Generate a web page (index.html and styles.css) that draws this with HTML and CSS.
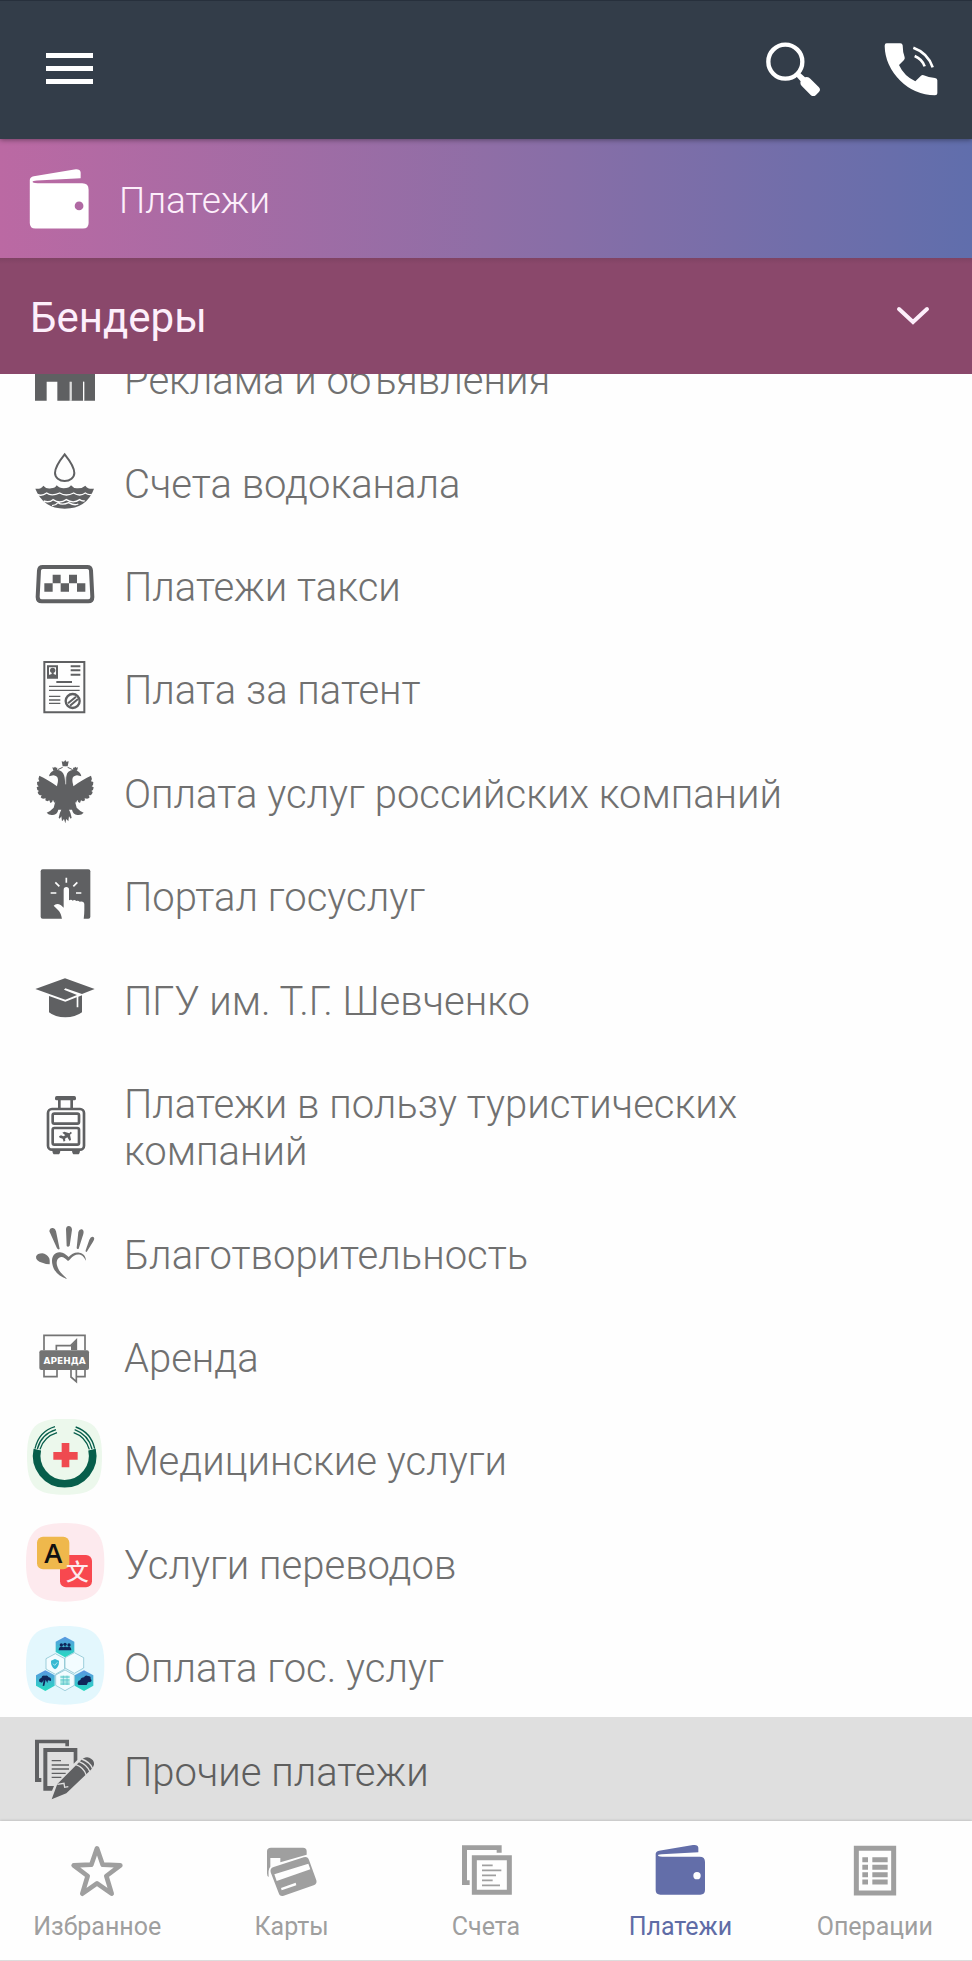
FILE: index.html
```html
<!DOCTYPE html>
<html lang="ru">
<head>
    <meta charset="UTF-8">
    <meta name="viewport" content="width=device-width, initial-scale=1.0">
    <title>Платежи</title>
    <link rel="stylesheet" href="styles.css">
</head>
<body>
    <header class="topbar">
        <button type="button" class="icon-btn" aria-label="Меню">
            <svg class="icon-menu" viewBox="0 0 47 32"><path d="M0 0h47v5H0zM0 13h47v5H0zM0 26h47v5H0z"/></svg>
        </button>
        <div class="topbar-actions">
            <button type="button" class="icon-btn" aria-label="Поиск">
                <svg class="icon-top" viewBox="843 128 162 162">
                    <circle cx="901" cy="187" r="51" fill="none" stroke="#fff" stroke-width="13"/>
                    <path d="M932 229l11-10 17 15q10-3 16 4l25 25q8 8 0 16l-8 8q-8 8-16 0l-26-26q-7-7-4-15z"/>
                </svg>
            </button>
            <button type="button" class="icon-btn" aria-label="Позвонить">
                <svg class="icon-top" viewBox="1196 128 162 162">
                    <path d="M1204 132h41q6 0 7 6 0 20 6 36 1 5-2 8l-15 15q15 33 49 49l17-17q4-3 8-1 14 6 34 8 7 1 7 7v39q0 6-7 6-62-2-104-44-46-46-47-105 0-7 6-7z"/>
                    <path d="M1284 145q44 16 58 59M1288 170q22 9 30 31" fill="none" stroke="#fff" stroke-width="8"/>
                </svg>
            </button>
        </div>
    </header>

    <div class="section-title">
        <svg class="icon-wallet" viewBox="508 434 151 151"><path d="M510 462q0-8 10-10l102-17q15-2 16 8v14l-110 6q-14 1-10 5 4 2 12 2h112q16 0 16 16v84q0 14-14 14H524q-14 0-14-14z"/><circle class="wallet-dot" cx="634" cy="527" r="11"/></svg>
        <h1>Платежи</h1>
    </div>

    <div class="city">
        <select id="city" name="city" aria-label="Город">
            <option>Бендеры</option>
            <option>Тирасполь</option>
            <option>Рыбница</option>
        </select>
        <svg class="icon-chevron" viewBox="0 0 34 20"><path d="M3 3l14 13L31 3" fill="none" stroke="#fdeffb" stroke-width="4" stroke-linecap="round"/></svg>
    </div>

    <main class="list">
        <a class="row" href="#">
            <svg class="row-icon" viewBox="75 1014 240 240"><path d="M105 1080h180v122h-33v-57h-2v57h-39v-57h-2v57h-37v-57h-32v57h-35z"/><path d="M211 1145h4v57h-4zM249 1145h4v57h-4z" fill="#fefefe"/></svg>
            <span>Реклама и объявления</span>
        </a>
        <a class="row" href="#">
            <svg class="row-icon" viewBox="75 64 240 240">
                <path d="M194 101q-29 36-29 56a29 24 0 0 0 58 0q0-20-29-56z" fill="none" stroke="#5f6062" stroke-width="6"/>
                <path d="M106 204q15 3 24-9 9 11 23 8 13 0 17-9 8 9 21 9 17 0 22-9 7 9 18 9 15 1 25-8 9 12 26 9-21 59-88 60-65-1-88-60z"/>
                <path d="M112 221q13 7 28-4 14 11 39 0 19 12 42 0 18 12 35 0 10 7 19 4M131 241q17 6 28-4 20 14 40 0 21 13 40 0 9 6 15 3M156 255q12-1 18-9 12 9 32 0 18 10 29 4" fill="none" stroke="#fefefe" stroke-width="4"/>
            </svg>
            <span>Счета водоканала</span>
        </a>
        <a class="row" href="#">
            <svg class="row-icon" viewBox="75 374 240 240">
                <path d="M128 440h134q10 0 11 10l4 80q0 13-12 13H125q-12 0-12-13l4-80q1-10 11-10z" fill="none" stroke="#5f6062" stroke-width="12"/>
                <path d="M158 463h24v26h-24zM207 463h24v26h-24zM133 489h25v25h-25zM182 489h25v25h-25zM231 489h25v25h-25z"/>
            </svg>
            <span>Платежи такси</span>
        </a>
        <a class="row" href="#">
            <svg class="row-icon" viewBox="75 685 240 240">
                <path d="M133 727h120v151H133zM144 740h27v34h-27z" fill="none" stroke="#5f6062" stroke-width="6"/>
                <circle cx="158" cy="752" r="8"/><path d="M155 758h6v5l10 4v8h-27v-8l11-4z"/>
                <path d="M212 740h29M212 752h29M212 765h29M169 787h47" stroke="#5f6062" stroke-width="6"/>
                <path d="M147 800h92M147 812h92M147 830h34M147 841h34M147 851h34" stroke="#5f6062" stroke-width="4"/>
                <circle cx="218" cy="844" r="21" fill="none" stroke="#5f6062" stroke-width="7"/>
                <path d="M204 851l24-20M210 858l24-20" stroke="#5f6062" stroke-width="6"/>
            </svg>
            <span>Плата за патент</span>
        </a>
        <a class="row" href="#">
            <svg class="row-icon" viewBox="75 65 240 240">
                <defs>
                    <g id="eagle-half">
                        <path d="M196 89L192 94L185 93L188 108H196z"/>
                        <path d="M188 111L173 118" fill="none" stroke="#5f6062" stroke-width="3"/>
                        <path d="M157 111L162 112L165 109L168 112L172 112L171 122L160 121z"/>
                        <path d="M196 162C194 146 197 122 171 118L160 121Q149 126 147 138L160 135C168 136 174 140 174 148C174 158 171 162 171 168C152 153 134 144 118 136Q113 145 118 153L111 155Q110 164 116 168L110 171Q110 180 117 182L113 185Q115 196 125 195L122 201Q126 208 137 204L136 210Q142 215 148 210L151 218Q158 216 159 208L163 218Q167 214 167 210L161 232Q152 242 140 247Q147 256 159 254Q172 252 175 238L184 238Q178 248 176 262L179 265L184 258L186 273L192 266L196 279z"/>
                    </g>
                </defs>
                <use href="#eagle-half"/>
                <use href="#eagle-half" transform="translate(391 0) scale(-1 1)"/>
                <path d="M200 128q-4 12-3 34" fill="none" stroke="#fefefe" stroke-width="2"/>
            </svg>
            <span>Оплата услуг российских компаний</span>
        </a>
        <a class="row" href="#">
            <svg class="row-icon" viewBox="75 376 240 240">
                <rect x="122" y="419" width="149" height="148" rx="6"/>
                <path d="M186 569q-2-18-12-28l-13-13q9-10 22-1l8 7v-54q0-8 8-8t8 8v32q7-4 11 1 5-4 11 1 5-3 10 2 13-3 14 8v17q0 12-2 28z" fill="#fefefe"/>
                <path d="M199 444v15M166 458l12 12M232 458l-12 12M152 490h17M228 490h16" stroke="#fefefe" stroke-width="5"/>
            </svg>
            <span>Портал госуслуг</span>
        </a>
        <a class="row" href="#">
            <svg class="row-icon" viewBox="75 686 240 240">
                <path d="M195 744l89 32-38 15-50-17-4 4 39 16-35 14-90-32z"/>
                <path d="M147 797l49 17 34-13v30h5v-32l11-4v51q-20 15-50 15-31 0-49-15z"/>
            </svg>
            <span>ПГУ им. Т.Г. Шевченко</span>
        </a>
        <a class="row" href="#">
            <svg class="row-icon" viewBox="75 46 240 240">
                <rect x="165" y="76" width="63" height="13" rx="5"/>
                <path d="M178 88v26M215 88v26" stroke="#5f6062" stroke-width="8"/>
                <g fill="none" stroke="#5f6062">
                    <rect x="144" y="115" width="108" height="122" rx="12" stroke-width="8"/>
                    <rect x="158" y="129" width="79" height="30" rx="5" stroke-width="8"/>
                    <rect x="158" y="172" width="79" height="50" rx="5" stroke-width="8"/>
                </g>
                <path d="M157 237h24q0 14-7 14h-10q-7 0-7-14zM216 237h24q0 14-7 14h-10q-7 0-7-14z"/>
                <path d="M177 197l6-3 7 3 6-3-9-8 6-3 15 5 4-5 4 4-6 5 3 15-4 4-7-11-7 4 1 6-5 3-3-9-9-3z"/>
            </svg>
            <span>Платежи в пользу туристических компаний</span>
        </a>
        <a class="row" href="#">
            <svg class="row-icon row-icon-soft" viewBox="75 427 240 240">
                <path d="M148 482q1-11 11-10 7 1 9 10l11 53q-5 3-8-2zM198 475q1-9 8-9 9 0 10 11l-7 48q-5 6-9 1zM235 484q3-10 11-8 7 3 4 14l-14 44q-5 3-6-2zM268 507q5-11 12-8 6 4-1 14l-19 31q-5 0-3-5zM108 558q4-10 19-10 13 2 20 13 3 5 2 20-11 0-22-5-20-6-19-18z"/>
                <path d="M157 580C153 560 162 546 178 545C190 544 197 552 206 559C214 550 225 544 238 546C250 548 259 558 257 570C249 550 234 549 222 555C214 559 210 567 204 571C197 564 190 558 183 559C172 561 168 572 171 584C175 600 185 610 202 625C177 618 160 600 157 580z"/>
            </svg>
            <span>Благотворительность</span>
        </a>
        <a class="row" href="#">
            <svg class="row-icon row-icon-soft" viewBox="75 737 240 240">
                <path d="M132 840v-45h123v45M169 840v-14h43l17-17v30M132 899v20h39v-20M255 899v20h-26M213 899v21l16 14v-35" fill="none" stroke="#747474" stroke-width="5"/>
                <path d="M213 826l16-15v28h-16z"/>
                <rect x="118" y="840" width="149" height="59" rx="6"/>
                <text class="rent-text" x="194" y="880" text-anchor="middle">АРЕНДА</text>
            </svg>
            <span>Аренда</span>
        </a>
        <a class="row" href="#">
            <svg class="row-icon" viewBox="75 58 240 240">
                <path d="M81 171C81 82 106 57 194 57S306 82 306 171S282 285 194 285S81 260 81 171z" fill="#ecf8ec"/>
                <g fill="none" stroke="#075e4b">
                    <path d="M112 150a84 84 0 1 0 164 0" stroke-width="23"/>
                    <path d="M105 147Q117 95 165 81M112 148Q124 103 168 90M120 149Q132 111 171 99M284 147Q273 98 227 82M276 148Q265 105 224 90M268 149Q256 111 221 99" stroke-width="4"/>
                </g>
                <path d="M185 130h23v27h25v23h-25v23h-23v-23h-25v-23h25z" fill="#ef4a50"/>
            </svg>
            <span>Медицинские услуги</span>
        </a>
        <a class="row" href="#">
            <svg class="row-icon" viewBox="75 368 240 240">
                <path d="M78 486C78 396 106 368 195 368S313 396 313 486S285 604 195 604S78 576 78 486z" fill="#fdeaee"/>
                <rect x="180" y="464" width="96" height="97" rx="18" fill="#f8484f"/>
                <rect x="111" y="409" width="97" height="98" rx="18" fill="#efb84c"/>
                <text class="glyph-a" x="160" y="489" text-anchor="middle">A</text>
                <text class="glyph-wen" x="232" y="538" text-anchor="middle">文</text>
            </svg>
            <span>Услуги переводов</span>
        </a>
        <a class="row" href="#">
            <svg class="row-icon" viewBox="75 679 240 240">
                <defs>
                    <linearGradient id="hexFill" x1="0" y1="0" x2="0" y2="1">
                        <stop offset="0" stop-color="#5b94e2"/>
                        <stop offset="1" stop-color="#24dcc0"/>
                    </linearGradient>
                    <path id="hex" d="M0-31l28 15v31L0 31l-28-16v-31z"/>
                </defs>
                <path d="M78 797C78 707 106 679 195 679S313 707 313 797S285 915 195 915S78 887 78 797z" fill="#e3f7fd"/>
                <g fill="url(#hexFill)">
                    <use href="#hex" x="195" y="742"/>
                    <use href="#hex" x="136" y="843"/>
                    <use href="#hex" x="252" y="843"/>
                </g>
                <g fill="#f3fcff" stroke="#77b9c8" stroke-width="2">
                    <use href="#hex" x="166" y="793"/>
                    <use href="#hex" x="223" y="790"/>
                    <use href="#hex" x="195" y="842"/>
                </g>
                <g fill="#10265a">
                    <circle cx="184" cy="736" r="5"/><circle cx="195" cy="734" r="5"/><circle cx="207" cy="736" r="5"/>
                    <path d="M176 752q0-11 8-11 5 0 6 2 6-5 11 0 1-2 6-2 7 0 7 11z"/>
                    <path d="M118 846q-3-9 6-11 2-9 11-7 8-3 11 5 9 1 7 11l-9-2-2 8-5-10-4 18-5 1 3-18-5 8z"/>
                    <path d="M233 849q1-7 8-8 2-8 11-8 4-8 12-4 10 0 8 9 6 4-1 9l-7 1-4 8h-24q-4-1-3-7z"/>
                </g>
                <path d="M165 778l12 5q1 18-12 26-13-8-12-26z" fill="#36b9d2"/>
                <path d="M159 792l5 5 8-9" fill="none" stroke="#eafaff" stroke-width="2"/>
                <path d="M181 828h28v8h-28zM181 838h28v8h-28zM181 848h28v8h-28z" fill="#86ddd8"/>
                <path d="M190 828v28M201 828v28" stroke="#5fb6cf" stroke-width="2"/>
            </svg>
            <span>Оплата гос. услуг</span>
        </a>
        <a class="row row-selected" href="#">
            <svg class="row-icon" viewBox="75 89 240 240">
                <path d="M105 118h102v20h-11v-9h-79v104h7v12h-19z"/>
                <path d="M130 143h102v36l-11 11v-35h-79v102h20l-6 14h-26z"/>
                <path d="M155 181h28M155 194h52M155 206h52M155 219h42M155 231h29" stroke="#5f6062" stroke-width="4"/>
                <path d="M155 297l17-46 68-68q14-16 28-11 16 7 14 21-2 8-9 15l-74 71z"/>
                <path d="M172 252l20-3 2 12 11-2M226 192q27 10 33 33M236 183q27 11 34 32M245 176q25 9 33 29" fill="none" stroke="#dfdfdf" stroke-width="4"/>
            </svg>
            <span>Прочие платежи</span>
        </a>
    </main>

    <nav class="tabs">
        <a class="tab" href="#">
            <svg class="tab-icon" viewBox="202 420 180 180"><path d="M292 445l17 49 53 2-42 32 16 53-44-31-44 31 16-53-42-32 53-2z" fill="none" stroke="#9f9f9f" stroke-width="14" stroke-linejoin="round"/></svg>
            <span>Избранное</span>
        </a>
        <a class="tab" href="#">
            <svg class="tab-icon" viewBox="785 420 180 180">
                <path d="M812 443h96q11 0 11 11v10l-79 23v-13h-30v26q-7 7-5 31-5-2-5-11v-66q0-11 12-11z"/>
                <path d="M820 501l90-29q12-4 16 8l22 61q3 11-8 15l-90 31q-12 3-15-8l-24-62q-3-12 9-16z"/>
                <path d="M822 523l102-32 6 17-101 35zM842 564l44-16 2 8-44 15z" fill="#fefefe"/>
            </svg>
            <span>Карты</span>
        </a>
        <a class="tab" href="#">
            <svg class="tab-icon" viewBox="1368 420 180 180">
                <path d="M1386 436h119v22h-15v-8h-89v91h8v14h-23z"/>
                <path d="M1423 473h105v104h-105z" fill="none" stroke="#9f9f9f" stroke-width="15"/>
                <path d="M1446 496h32M1446 511h58M1446 526h42M1446 541h32M1446 556h54" stroke="#9f9f9f" stroke-width="5"/>
            </svg>
            <span>Счета</span>
        </a>
        <a class="tab tab-active" href="#">
            <svg class="tab-icon" viewBox="493 420 180 180"><path d="M510 462q0-8 10-10l102-17q15-2 16 8v14l-110 6q-14 1-10 5 4 2 12 2h112q16 0 16 16v84q0 14-14 14H524q-14 0-14-14z"/><circle cx="634" cy="527" r="11" fill="#fefefe"/></svg>
            <span>Платежи</span>
        </a>
        <a class="tab" href="#">
            <svg class="tab-icon" viewBox="1076 420 180 180">
                <path d="M1110 445h112v134h-112z" fill="none" stroke="#9f9f9f" stroke-width="15"/>
                <path d="M1128 479h17M1158 479h46M1128 502h17M1158 502h46M1128 524h17M1158 524h46M1128 546h17M1158 546h46" stroke="#9f9f9f" stroke-width="15"/>
            </svg>
            <span>Операции</span>
        </a>
    </nav>
</body>
</html>
```

FILE: styles.css
```css
* {
    box-sizing: border-box;
}
body {
    margin: 0;
    height: 100vh;
    display: flex;
    flex-direction: column;
    background: #fefefe;
    font-family: Roboto, "Liberation Sans", sans-serif;
    font-weight: 300;
    color: #707070;
}
svg {
    display: block;
    flex: none;
}

/* header */
.topbar {
    position: relative;
    z-index: 3;
    display: flex;
    justify-content: space-between;
    align-items: center;
    padding: 41px 34px 43px 46px;
    background: #333d49;
    border-top: 1px solid #27303c;
    box-shadow: 0 1px 5px rgba(0, 0, 0, 0.4);
}
.topbar-actions {
    display: flex;
    gap: 64px;
}
.icon-btn {
    padding: 0;
    border: none;
    background: none;
    cursor: pointer;
    fill: #fff;
}
.icon-menu {
    width: 47px;
    height: 32px;
}
.icon-top {
    width: 54px;
    height: 54px;
}

.section-title {
    display: flex;
    align-items: center;
    gap: 30px;
    padding: 30px 30px 29px 29px;
    background: linear-gradient(to right, #bb69a3, #8f6ea6 50%, #606eac);
}
.section-title h1 {
    margin: 0;
    padding-top: 4px;
    font-size: 37px;
    line-height: 44px;
    font-weight: 300;
    color: #fdeffb;
}
.icon-wallet {
    width: 60px;
    height: 60px;
    fill: #fff;
}
.wallet-dot {
    fill: #b069a3;
}

/* city select */
.city {
    display: grid;
    align-items: center;
    background: linear-gradient(#7f4363, #8a486b 6px);
    position: relative;
    z-index: 2;
}
.city select {
    grid-area: 1 / 1;
    width: 100%;
    padding: 34px 30px 30px;
    border: none;
    appearance: none;
    background: transparent;
    font-family: inherit;
    font-size: 42px;
    line-height: 52px;
    font-weight: 400;
    color: #fdeffb;
}
.icon-chevron {
    grid-area: 1 / 1;
    justify-self: end;
    width: 34px;
    height: 20px;
    margin-right: 42px;
    pointer-events: none;
}

/* payments list */
.list {
    flex: 1;
    min-height: 0;
    display: flex;
    flex-direction: column;
    overflow: hidden;
}
.row {
    flex: 1 0 auto;
    display: flex;
    align-items: center;
    gap: 19px;
    padding: 26px 180px 25px 25px;
    font-size: 40px;
    line-height: 47px;
    color: inherit;
    text-decoration: none;
}
.row span {
    padding-top: 5px;
}
/* list is scrolled a little */
.row:first-child {
    margin-top: -48px;
}
.row-selected {
    background: #dfdfdf;
    color: #5e5e5e;
}
.row-icon {
    width: 80px;
    height: 80px;
    margin: -20px 0;
    fill: #5f6062;
}
.row-icon-soft {
    fill: #747474;
}
.rent-text {
    font-family: "DejaVu Sans", sans-serif;
    font-size: 27px;
    font-weight: 700;
    fill: #fefefe;
}
.glyph-a {
    font-family: "Open Sans", sans-serif;
    font-size: 82px;
    font-weight: 600;
    fill: #111;
}
.glyph-wen {
    font-family: "Noto Sans CJK SC", sans-serif;
    font-size: 68px;
    font-weight: 500;
    fill: #fdeaee;
}

/* bottom tabs */
.tabs {
    display: flex;
    border-bottom: 1px solid #dcdcdc;
    background: #fefefe;
    box-shadow: 0 -1px 2px rgba(0, 0, 0, 0.12);
}
.tab {
    flex: 1;
    display: flex;
    flex-direction: column;
    align-items: center;
    gap: 11px;
    padding: 19px 0 17px;
    font-size: 25px;
    line-height: 32px;
    font-weight: 400;
    color: #9f9f9f;
    text-decoration: none;
    fill: #9f9f9f;
}
.tab-active {
    color: #5f6ca6;
    fill: #636ea9;
}
.tab-icon {
    width: 60px;
    height: 60px;
}
```
